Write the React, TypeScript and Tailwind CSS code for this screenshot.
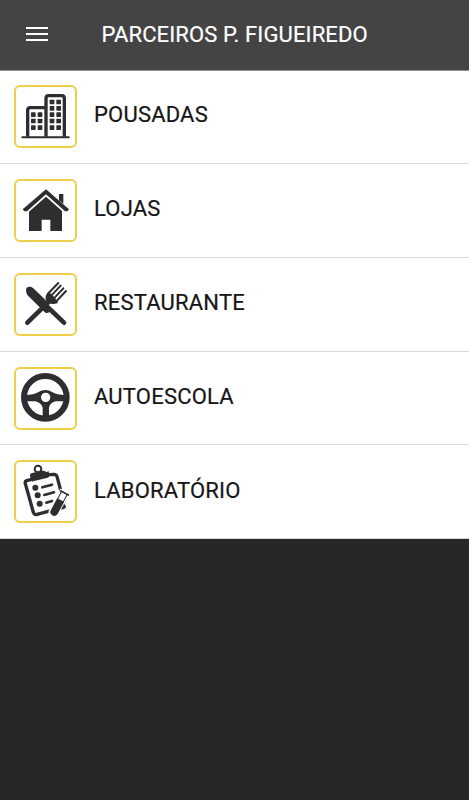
import type { ReactNode } from "react";

type Partner = {
  label: string;
  icon: ReactNode;
};

const DARK = "#2e2d2f";

function BuildingsIcon() {
  return (
    <g fill="none" stroke={DARK}>
      <path d="M43 178H182" strokeWidth="6" strokeLinecap="round" />
      <path d="M59 176V97q0-8 8-8H112M114 176V61q0-8 8-8H161q8 0 8 8V176" strokeWidth="10" />
      <g fill={DARK} stroke="none">
        {[103, 122, 142].map((y) => (
          <g key={y}>
            <rect x="69" y={y} width="14" height="14" rx="2" />
            <rect x="89" y={y} width="14" height="14" rx="2" />
          </g>
        ))}
        {[65, 84, 103, 122, 142].map((y) => (
          <g key={y}>
            <rect x="125" y={y} width="14" height="14" rx="2" />
            <rect x="145" y={y} width="14" height="14" rx="2" />
          </g>
        ))}
      </g>
    </g>
  );
}

function HouseIcon() {
  return (
    <g fill={DARK}>
      <path d="M114 52L183 112L178 118H171L114 67L57 118H49L44 112Z" />
      <path d="M153 66H166V96L153 85Z" />
      <path d="M114 74L162 117V177H127V143H101V177H63V119Z" />
    </g>
  );
}

function CutleryIcon() {
  return (
    <g fill="none" stroke={DARK} strokeLinecap="round">
      <path d="M54 74Q53 61 67 62Q72 63 76 67L112 101L127 131Q124 144 112 140L60 89Q55 83 54 74Z" fill={DARK} stroke="none" />
      <path d="M109 114L168 170" strokeWidth="14" />
      <path d="M58 170L126 104" strokeWidth="14" />
      <path d="M118 85Q111 96 118 106Q129 116 147 110L140 98L127 84Z" fill={DARK} strokeWidth="4" />
      <path d="M119 84L151 51M127 92L158 59M135 100L166 67M143 108L174 75" strokeWidth="6" />
    </g>
  );
}

function SteeringWheelIcon() {
  return (
    <g>
      <circle cx="112" cy="112" r="64" fill="none" stroke={DARK} strokeWidth="18" />
      <path
        fillRule="evenodd"
        fill={DARK}
        d="M54 105Q76 105 90 97Q112 83 134 97Q148 105 170 105V124H143Q125 129 123 143V170H104V143Q101 129 82 124H54ZM99 112a14 14 0 1 0 28 0a14 14 0 1 0-28 0Z"
      />
    </g>
  );
}

function LabIcon() {
  return (
    <g>
      <g fill="none" stroke={DARK} strokeLinejoin="round" strokeLinecap="round">
        <path d="M68 80L56 83Q50 85 52 92L76 178Q79 187 87 184L132 172M124 65L139 64Q145 64 147 71L157 108" strokeWidth="10" />
        <path d="M103 103L132 95M109 126L138 118M115 149L132 144" strokeWidth="8" />
        <circle cx="90" cy="48" r="10" strokeWidth="6" />
      </g>
      <g fill={DARK}>
        <path d="M66 68Q65 62 71 61L81 58Q89 62 98 54L108 53Q113 53 114 58L122 55L124 69Q124 73 119 74L75 85Q70 86 69 82Z" />
        <circle cx="82" cy="104" r="9" />
        <circle cx="89" cy="127" r="9" />
        <circle cx="95" cy="152" r="9" />
      </g>
      <path d="M164 146L174 160Q174 168 164 169L152 172Z" fill={DARK} />
      <g transform="rotate(28 152 149)">
        <path d="M137 109H168V182Q168 196 153 196Q137 196 137 182Z" fill="white" />
        <path d="M144 116V178Q144 189 153 189Q163 189 163 178V116" fill="white" stroke={DARK} strokeWidth="3" />
        <path d="M142 139H165V180Q165 191 153 191Q142 191 142 180Z" fill={DARK} />
        <path d="M140 115H167" stroke={DARK} strokeWidth="5" strokeLinecap="round" />
      </g>
    </g>
  );
}

const partners: Partner[] = [
  { label: "POUSADAS", icon: <BuildingsIcon /> },
  { label: "LOJAS", icon: <HouseIcon /> },
  { label: "RESTAURANTE", icon: <CutleryIcon /> },
  { label: "AUTOESCOLA", icon: <SteeringWheelIcon /> },
  { label: "LABORATÓRIO", icon: <LabIcon /> },
];

function PartnerRow({ label, icon }: Partner) {
  return (
    <li className="flex flex-1 items-center border-b border-[#d8d8d8] pl-3.5">
      <div className="size-[63px] shrink-0 rounded-md border-2 border-[#efce4a]">
        <svg viewBox="24 27 177 177" className="block size-full">
          {icon}
        </svg>
      </div>
      <span className="ml-[17px] pb-0.5 text-[22px] leading-7 tracking-[0.2px] text-[#161616] [-webkit-text-stroke:0.2px_#161616]">
        {label}
      </span>
    </li>
  );
}

export default function App() {
  return (
    <div className="flex h-screen flex-col bg-[#272727] font-['Roboto',sans-serif]">
      <header className="flex h-[70px] shrink-0 items-center bg-[#444444] text-white">
        <button aria-label="Menu" className="ml-[26px] flex w-[22px] flex-col gap-1 pb-0.5">
          <span className="h-[2px] bg-white" />
          <span className="h-[2px] bg-white" />
          <span className="h-[2px] bg-white" />
        </button>
        <h1 className="ml-[53.5px] text-[22px] leading-7 tracking-[0.12px] whitespace-nowrap [-webkit-text-stroke:0.2px_white]">
          PARCEIROS P. FIGUEIREDO
        </h1>
      </header>

      <ul className="flex h-[469.3px] shrink-0 flex-col bg-white shadow-[inset_0_1px_0_#8f8f8f]">
        {partners.map((partner) => (
          <PartnerRow key={partner.label} {...partner} />
        ))}
      </ul>
    </div>
  );
}
